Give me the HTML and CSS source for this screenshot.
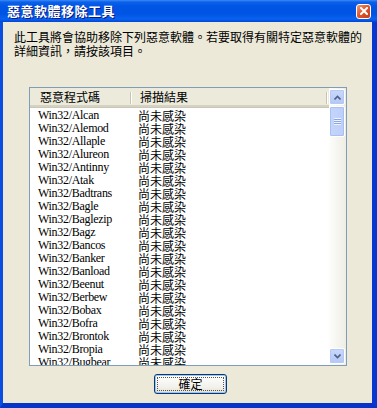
FILE: index.html
```html
<!DOCTYPE html>
<html lang="zh-Hant">
<head>
    <meta charset="UTF-8">
    <meta name="viewport" content="width=device-width, initial-scale=1.0">
    <title>惡意軟體移除工具</title>
    <link rel="stylesheet" href="styles.css">
</head>
<body>
    <div class="window">
        <div class="titlebar">
            <span class="title">惡意軟體移除工具</span>
            <span class="close">
                <svg width="8" height="8" viewBox="0 0 8 8"><path d="M1 1L7 7M7 1L1 7" stroke="#fff" stroke-width="2" stroke-linecap="square"/></svg>
            </span>
        </div>
        <div class="frame">
            <div class="client">
                <p class="intro">此工具將會協助移除下列惡意軟體。若要取得有關特定惡意軟體的<br>詳細資訊，請按該項目。</p>
                <div class="listview">
                    <div class="list">
                        <div class="header">
                            <div class="col col-name">惡意程式碼</div>
                            <div class="col col-state">掃描結果</div>
                            <div class="col col-rest"></div>
                        </div>
                        <div class="rows">
                            <div class="row"><span class="name">Win32/Alcan</span><span class="state">尚未感染</span></div>
                            <div class="row"><span class="name">Win32/Alemod</span><span class="state">尚未感染</span></div>
                            <div class="row"><span class="name">Win32/Allaple</span><span class="state">尚未感染</span></div>
                            <div class="row"><span class="name">Win32/Alureon</span><span class="state">尚未感染</span></div>
                            <div class="row"><span class="name">Win32/Antinny</span><span class="state">尚未感染</span></div>
                            <div class="row"><span class="name">Win32/Atak</span><span class="state">尚未感染</span></div>
                            <div class="row"><span class="name">Win32/Badtrans</span><span class="state">尚未感染</span></div>
                            <div class="row"><span class="name">Win32/Bagle</span><span class="state">尚未感染</span></div>
                            <div class="row"><span class="name">Win32/Baglezip</span><span class="state">尚未感染</span></div>
                            <div class="row"><span class="name">Win32/Bagz</span><span class="state">尚未感染</span></div>
                            <div class="row"><span class="name">Win32/Bancos</span><span class="state">尚未感染</span></div>
                            <div class="row"><span class="name">Win32/Banker</span><span class="state">尚未感染</span></div>
                            <div class="row"><span class="name">Win32/Banload</span><span class="state">尚未感染</span></div>
                            <div class="row"><span class="name">Win32/Beenut</span><span class="state">尚未感染</span></div>
                            <div class="row"><span class="name">Win32/Berbew</span><span class="state">尚未感染</span></div>
                            <div class="row"><span class="name">Win32/Bobax</span><span class="state">尚未感染</span></div>
                            <div class="row"><span class="name">Win32/Bofra</span><span class="state">尚未感染</span></div>
                            <div class="row"><span class="name">Win32/Brontok</span><span class="state">尚未感染</span></div>
                            <div class="row"><span class="name">Win32/Bropia</span><span class="state">尚未感染</span></div>
                            <div class="row"><span class="name">Win32/Bugbear</span><span class="state">尚未感染</span></div>
                        </div>
                    </div>
                    <div class="scrollbar">
                        <div class="sb-btn">
                            <svg width="7" height="5" viewBox="0 0 7 5"><path d="M0.5 4.5L3.5 1.5L6.5 4.5" fill="none" stroke="#4d6185" stroke-width="1.6"/></svg>
                        </div>
                        <div class="sb-thumb">
                            <span class="grip"></span>
                        </div>
                        <div class="sb-track"></div>
                        <div class="sb-btn">
                            <svg width="7" height="5" viewBox="0 0 7 5"><path d="M0.5 0.5L3.5 3.5L6.5 0.5" fill="none" stroke="#4d6185" stroke-width="1.6"/></svg>
                        </div>
                    </div>
                </div>
                <div class="actions">
                    <button class="btn">確定</button>
                </div>
            </div>
        </div>
    </div>
</body>
</html>
```

FILE: styles.css
```css
* {
    box-sizing: border-box;
}
body {
    margin: 0;
    padding: 0;
    background: #ece9d8;
    font-family: "Noto Sans CJK TC", sans-serif;
}
.window {
    width: 377px;
    height: 408px;
    display: flex;
    flex-direction: column;
    background: #0054e3;
}
.titlebar {
    height: 22px;
    display: flex;
    align-items: center;
    justify-content: space-between;
    padding: 0 6px 0 7px;
    background: linear-gradient(#3d8bf7 0, #0c61ea 2px, #0055e5 6px, #0054e3 14px, #0a62f0 19px, #0045d8 22px);
}
.title {
    color: #fff;
    font-size: 13px;
    font-weight: bold;
    line-height: 14px;
    letter-spacing: 0.5px;
    text-shadow: 1px 1px 0 #0a1883;
}
.close {
    width: 15px;
    height: 15px;
    display: flex;
    align-items: center;
    justify-content: center;
    border: 1px solid #fff;
    border-radius: 3px;
    background: linear-gradient(135deg, #f09a7a, #e0582f 45%, #c23c18);
}
.frame {
    flex: 1;
    display: flex;
    border-left: 3px solid #0a4fe0;
    border-right: 5px solid #0838d0;
    border-bottom: 5px solid #0634c8;
}
.client {
    flex: 1;
    min-width: 0;
    background: #ece9d8;
    padding: 8px 25px 0 11px;
    display: flex;
    flex-direction: column;
}
.intro {
    margin: 0;
    font-size: 12px;
    line-height: 14px;
    color: #000;
    white-space: nowrap;
}
.listview {
    margin: 29px 0 0 15px;
    height: 279px;
    display: flex;
    border: 1px solid #7f9db9;
    background: #fff;
}
.list {
    flex: 1;
    min-width: 0;
    display: flex;
    flex-direction: column;
    overflow: hidden;
}
.header {
    height: 20px;
    flex-shrink: 0;
    display: flex;
    background: #ebeadb;
    border-bottom: 1px solid #cbc7b8;
    box-shadow: inset 0 -2px 0 #d6d2c2;
}
.col {
    font-size: 12px;
    line-height: 18px;
    position: relative;
}
.col-name {
    width: 102px;
    padding-left: 10px;
}
.col-state {
    width: 196px;
    padding-left: 8px;
}
.col-rest {
    flex: 1;
}
.col-name::after,
.col-state::after {
    content: "";
    position: absolute;
    right: 0;
    top: 4px;
    height: 12px;
    width: 2px;
    background: linear-gradient(to right, #c7c5b2 50%, #fff 50%);
}
.rows {
    padding-top: 1px;
}
.row {
    height: 13px;
    display: flex;
    font-size: 12px;
    line-height: 13px;
    color: #000;
}
.name {
    width: 108px;
    padding-left: 8px;
    font-family: "Liberation Serif", "Noto Sans CJK TC", serif;
    letter-spacing: -0.3px;
}
.state {
    font-family: "Noto Sans CJK TC", sans-serif;
}
.scrollbar {
    width: 17px;
    flex-shrink: 0;
    display: flex;
    flex-direction: column;
    padding: 1px 1px 1px 0;
    background: linear-gradient(to right, #fdfdfb, #eeede5);
}
.sb-btn {
    height: 16px;
    display: flex;
    align-items: center;
    justify-content: center;
    border: 1px solid #fff;
    border-radius: 2px;
    background: linear-gradient(#c9d8fc, #b4c8f5);
    box-shadow: inset 0 0 0 1px #b6c9f4;
}
.sb-thumb {
    height: 31px;
    margin-top: 1px;
    display: flex;
    align-items: center;
    justify-content: center;
    border: 1px solid #fff;
    border-radius: 2px;
    background: linear-gradient(to right, #c5d5fb, #bccffa);
    box-shadow: inset 0 0 0 1px #a9c0f3;
}
.grip {
    width: 7px;
    height: 7px;
    background: repeating-linear-gradient(#eef3fe 0, #eef3fe 1px, #8ca5e6 1px, #8ca5e6 2px);
}
.sb-track {
    flex: 1;
}
.actions {
    display: flex;
    justify-content: center;
    margin-top: 8px;
    padding-left: 20px;
}
.btn {
    width: 73px;
    height: 20px;
    padding: 0;
    font-family: "Noto Sans CJK TC", sans-serif;
    font-size: 12px;
    line-height: 14px;
    color: #000;
    border: 1px solid #003c74;
    border-radius: 3px;
    background: linear-gradient(#fff, #f1f0ea 70%, #e3e0d0);
    box-shadow: inset 0 0 0 1px #a8c0ee;
    outline: 1px dotted #555;
    outline-offset: -4px;
}
```
